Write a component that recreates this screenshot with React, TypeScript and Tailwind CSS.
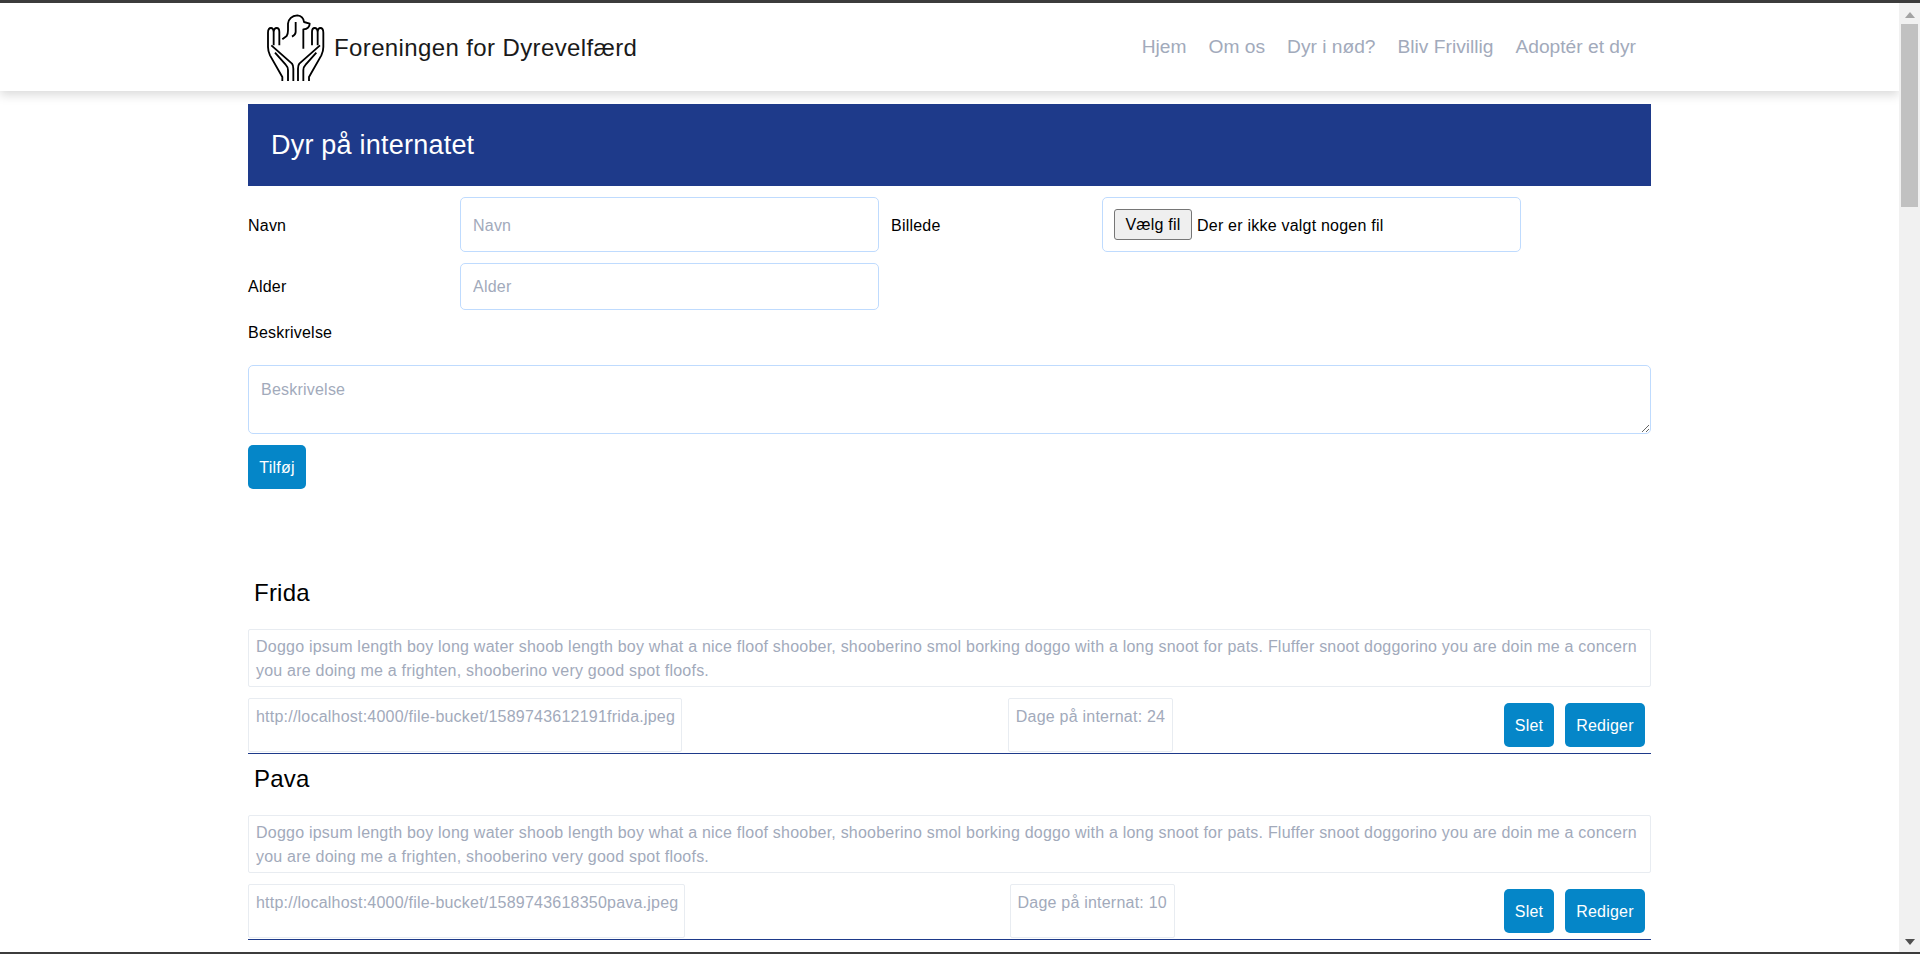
import React from "react";

const doggo =
  "Doggo ipsum length boy long water shoob length boy what a nice floof shoober, shooberino smol borking doggo with a long snoot for pats. Fluffer snoot doggorino you are doin me a concern you are doing me a frighten, shooberino very good spot floofs.";

const animals = [
  { name: "Frida", url: "http://localhost:4000/file-bucket/1589743612191frida.jpeg", days: 24 },
  { name: "Pava", url: "http://localhost:4000/file-bucket/1589743618350pava.jpeg", days: 10 },
];

function Logo() {
  return (
    <svg
      viewBox="0 0 192 210"
      className="w-[64px] h-[70px] shrink-0"
      fill="none"
      stroke="#000"
      strokeWidth="5.5"
      strokeLinejoin="round"
    >
      {/* left hand */}
      <path d="M55 207 V195 L18 130 Q12 118 12 105 V62 Q12 48 21 48 Q28 48 29 60 V100 M29 60 Q30 48 38 48 Q46 48 46 60 V100" />
      <path d="M22 100 L84 155 Q88 160 88 170 V207" />
      <path d="M72 207 V175 Q72 165 65 158 L33 122" />
      {/* right hand */}
      <path d="M135 207 V195 L172 130 Q178 118 178 105 V62 Q178 48 169 48 Q162 48 161 60 V100 M161 60 Q160 48 152 48 Q144 48 144 60 V100" />
      <path d="M168 100 L106 155 Q102 160 102 170 V207" />
      <path d="M118 207 V175 Q118 165 125 158 L157 122" />
      {/* dog */}
      <path d="M55 82 L68 72 Q72 66 72 55 V35 Q75 12 100 10 Q118 12 120 30 L137 35 Q137 50 118 52 V110" />
      <path d="M95 30 V60 Q95 68 84 74" />
    </svg>
  );
}

function Button({ children, className = "" }: { children: React.ReactNode; className?: string }) {
  return (
    <button className={`h-[44px] pt-[2px] rounded-[5px] bg-[#0586c8] text-white text-base ${className}`}>
      {children}
    </button>
  );
}

function AnimalCard({ name, url, days }: { name: string; url: string; days: number }) {
  return (
    <div className="border-b border-[#1e3a8a]">
      <h2 className="h-[61px] pl-[6px] pt-[11px] text-2xl leading-[28px] text-black">{name}</h2>
      <p className="border border-[#e8ecf1] rounded-[2px] px-[7px] pt-[5px] pb-[3px] text-[#a2aabb] text-base leading-6">
        {doggo}
      </p>
      <div className="flex justify-between mt-[11px] h-[55px]">
        <div className="h-[54px] border border-[#e8ecf1] rounded-[2px] pl-[7px] pr-[6px] pt-[6px] text-[#a2aabb] leading-6">
          {url}
        </div>
        <div className="h-[54px] border border-[#e8ecf1] rounded-[2px] px-[7px] pt-[6px] text-[#a2aabb] leading-6">
          Dage på internat: {days}
        </div>
        <div className="flex gap-[11px] pl-[5px] pr-[6px] pt-[5px]">
          <Button className="w-[50px]">Slet</Button>
          <Button className="w-[80px]">Rediger</Button>
        </div>
      </div>
    </div>
  );
}

export default function App() {
  return (
    <div className="h-[954px] overflow-hidden flex flex-col bg-white text-black tracking-[0.22px] font-['Liberation_Sans',Arial,sans-serif]">
      <div className="h-[3px] shrink-0 bg-[#3c3c3c]" />

      <div className="flex flex-1 min-h-0">
        <div className="flex-1 min-w-0 overflow-hidden">
          {/* Navbar */}
          <nav className="relative z-10 h-[88px] bg-white shadow-[0_4px_10px_rgba(0,0,0,0.15)]">
            <div className="mx-auto w-[1403px] h-full flex items-center justify-between pl-[16px] pr-[15px]">
              <div className="flex items-center gap-[6px]">
                <Logo />
                <span className="pt-[2px] text-2xl tracking-[0.38px] text-[#1a1a1a]">Foreningen for Dyrevelfærd</span>
              </div>
              <div className="flex gap-[22px] text-[19.2px] tracking-normal text-[#a2aabb]">
                <a>Hjem</a>
                <a>Om os</a>
                <a>Dyr i nød?</a>
                <a>Bliv Frivillig</a>
                <a>Adoptér et dyr</a>
              </div>
            </div>
          </nav>

          <main className="mx-auto w-[1403px] pt-[13px]">
            <div className="h-[82px] bg-[#1e3a8a] flex items-center pl-[23px] text-white text-[27px]">
              Dyr på internatet
            </div>

            {/* Form */}
            <div className="flex items-center mt-[11px] h-[55px]">
              <label className="w-[212px] shrink-0 pt-[2px]">Navn</label>
              <input
                placeholder="Navn"
                className="w-[419px] h-full border border-[#bfdbfe] rounded-[5px] px-3 pt-[2px] placeholder:text-[#a2aabb]"
              />
              <label className="w-[211px] shrink-0 ml-3 pt-[2px]">Billede</label>
              <div className="w-[419px] h-full border border-[#bfdbfe] rounded-[5px] flex items-center pl-[11px] gap-[5px]">
                <button className="w-[78px] h-[31px] pt-[1px] bg-[#efefef] border border-[#767676] rounded-[3px]">
                  Vælg fil
                </button>
                <span className="pt-[2px]">Der er ikke valgt nogen fil</span>
              </div>
            </div>
            <div className="flex items-center mt-[11px] h-[47px]">
              <label className="w-[212px] shrink-0 pt-[1px]">Alder</label>
              <input
                placeholder="Alder"
                className="w-[419px] h-full border border-[#bfdbfe] rounded-[5px] px-3 pt-[1px] placeholder:text-[#a2aabb]"
              />
            </div>
            <label className="block mt-[11px] leading-6">Beskrivelse</label>
            <textarea
              placeholder="Beskrivelse"
              className="block w-full h-[69px] mt-[20px] border border-[#bfdbfe] rounded-[5px] px-3 py-3 placeholder:text-[#a2aabb]"
            />
            <Button className="w-[58px] mt-[11px] block">Tilføj</Button>

            {/* Animal list */}
            <div className="mt-[79px]">
              {animals.map((a) => (
                <AnimalCard key={a.name} {...a} />
              ))}
            </div>
          </main>
        </div>

        {/* Scrollbar */}
        <div className="w-[21px] shrink-0 bg-[#f1f1f1] flex flex-col items-center">
          <div className="mt-[9px] h-0 w-0 border-x-[5px] border-x-transparent border-b-[6px] border-b-[#a3a3a3]" />
          <div className="mt-[6px] w-[17px] h-[183px] bg-[#c1c1c1]" />
          <div className="mt-auto mb-[7px] h-0 w-0 border-x-[5px] border-x-transparent border-t-[6px] border-t-[#505050]" />
        </div>
      </div>

      <div className="h-[2px] shrink-0 bg-[#3c3c3c]" />
    </div>
  );
}
